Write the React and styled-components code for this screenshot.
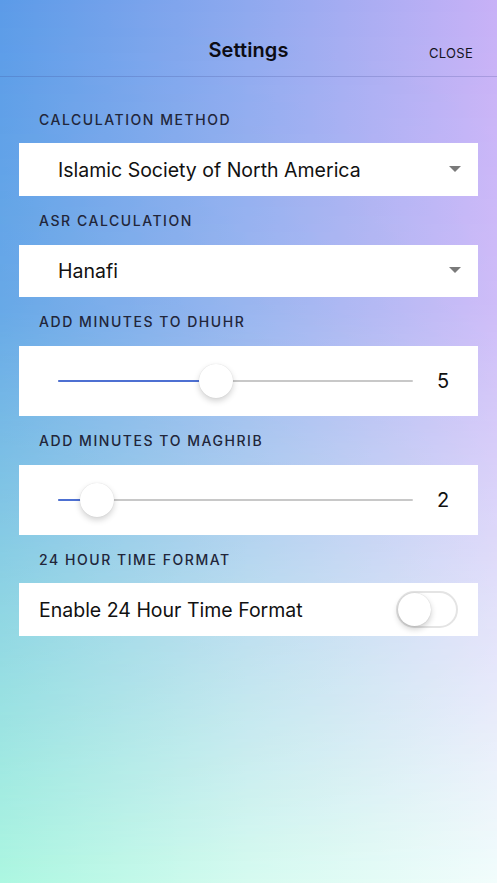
import React from 'react'
import styled, { createGlobalStyle } from 'styled-components'

const GlobalStyle = createGlobalStyle`
  html, body {
    margin: 0;
    padding: 0;
  }
  body {
    font-family: Inter, "Noto Sans", "Liberation Sans", sans-serif;
    -webkit-font-smoothing: antialiased;
  }
`

const Screen = styled.div`
  position: relative;
  width: 497px;
  height: 883px;
  overflow: hidden;
  background: linear-gradient(to right, #adf7e1 0%, #d6fbf0 50%, #f2fdfc 100%);

  &::before {
    content: '';
    position: absolute;
    inset: 0;
    background: linear-gradient(to right, #5b9be8 0%, #8fa9ef 50%, #c8b1f7 100%);
    -webkit-mask-image: linear-gradient(to bottom, #000 0%, rgba(0, 0, 0, 0.85) 35%, rgba(0, 0, 0, 0.35) 70%, transparent 100%);
    mask-image: linear-gradient(to bottom, #000 0%, rgba(0, 0, 0, 0.85) 35%, rgba(0, 0, 0, 0.35) 70%, transparent 100%);
  }
`

const Content = styled.div`
  position: relative;
  display: flex;
  flex-direction: column;
`

const Header = styled.header`
  height: 77px;
  box-sizing: border-box;
  border-bottom: 1px solid rgba(60, 70, 140, 0.22);
  display: grid;
  grid-template-columns: 1fr auto 1fr;
  align-items: center;
  padding: 0 24px 0;
`

const Title = styled.h1`
  grid-column: 2;
  margin: 0;
  padding-top: 24px;
  font-size: 20px;
  font-weight: 600;
  color: #0c0c14;
  letter-spacing: 0.1px;
`

const CloseButton = styled.button`
  grid-column: 3;
  justify-self: end;
  background: none;
  border: none;
  padding: 30px 0 0;
  font-family: inherit;
  font-size: 13px;
  color: #14141e;
  letter-spacing: 0.3px;
`

const Body = styled.main`
  display: flex;
  flex-direction: column;
  padding: 0 19px;
`

const SectionLabel = styled.div`
  padding: 0 20px;
  height: ${p => p.$h || 48}px;
  box-sizing: border-box;
  display: flex;
  align-items: ${p => (p.$first ? 'flex-end' : 'center')};
  padding-bottom: ${p => (p.$first ? 15 : 0)}px;
  font-size: 14px;
  font-weight: 500;
  letter-spacing: 1.55px;
  color: #22263a;
  text-transform: uppercase;
`

const Card = styled.div`
  background: #ffffff;
  height: ${p => p.$h}px;
  display: flex;
  align-items: center;
  box-sizing: border-box;
  padding: 0 ${p => p.$pr ?? 20}px 0 ${p => p.$pl ?? 20}px;
`

const SelectText = styled.span`
  flex: 1;
  font-size: 19.5px;
  color: #111;
`

const Caret = styled.span`
  width: 0;
  height: 0;
  border-left: 6px solid transparent;
  border-right: 6px solid transparent;
  border-top: 6px solid #7a7a7a;
  margin-top: -2px;
`

const Track = styled.div`
  position: relative;
  flex: 1;
  height: 2px;
  background: #c8c8c8;
  border-radius: 1px;
`

const Fill = styled.div`
  position: absolute;
  left: 0;
  top: 0;
  bottom: 0;
  background: #4d70d2;
  border-radius: 1px;
`

const Thumb = styled.div`
  position: absolute;
  top: 50%;
  width: 34px;
  height: 34px;
  border-radius: 50%;
  background: #fff;
  transform: translate(-50%, -50%);
  box-shadow: 0 3px 6px rgba(0, 0, 0, 0.18), 0 0 1px rgba(0, 0, 0, 0.15);
`

const SliderValue = styled.span`
  width: 60px;
  margin-right: 5px;
  text-align: center;
  font-size: 20px;
  color: #111;
`

const ToggleText = styled.span`
  flex: 1;
  font-size: 19.5px;
  color: #111;
`

const Switch = styled.div`
  position: relative;
  width: 62px;
  height: 37px;
  box-sizing: border-box;
  border-radius: 19px;
  border: 2px solid #e4e4e4;
  background: ${p => (p.$on ? '#4cd964' : '#fff')};
`

const Knob = styled.div`
  position: absolute;
  top: 0;
  left: ${p => (p.$on ? '26px' : '0')};
  width: 33px;
  height: 33px;
  border-radius: 50%;
  background: #fff;
  box-shadow: 0 3px 6px rgba(0, 0, 0, 0.2), 0 0 1px rgba(0, 0, 0, 0.2);
`

const Select = ({ value, h = 53 }) => (
  <Card $h={h} $pl={39} $pr={17}>
    <SelectText>{value}</SelectText>
    <Caret />
  </Card>
)

const Slider = ({ value, min = 1, max = 10 }) => {
  const pct = ((value - min) / (max - min)) * 100
  return (
    <Card $h={70} $pl={39} $pr={0}>
      <Track>
        <Fill style={{ width: `${pct}%` }} />
        <Thumb style={{ left: `${pct}%` }} />
      </Track>
      <SliderValue>{value}</SliderValue>
    </Card>
  )
}

const App = () => (
  <>
    <GlobalStyle />
    <Screen>
      <Content>
        <Header>
          <Title>Settings</Title>
          <CloseButton>CLOSE</CloseButton>
        </Header>
        <Body>
          <SectionLabel $first $h={66}>Calculation Method</SectionLabel>
          <Select value="Islamic Society of North America" />
          <SectionLabel $h={49}>Asr Calculation</SectionLabel>
          <Select value="Hanafi" h={52} />
          <SectionLabel $h={49}>Add Minutes to Dhuhr</SectionLabel>
          <Slider value={5} />
          <SectionLabel $h={49}>Add Minutes to Maghrib</SectionLabel>
          <Slider value={2} />
          <SectionLabel>24 Hour Time Format</SectionLabel>
          <Card $h={53} $pr={20}>
            <ToggleText>Enable 24 Hour Time Format</ToggleText>
            <Switch>
              <Knob />
            </Switch>
          </Card>
        </Body>
      </Content>
    </Screen>
  </>
)

export default App
